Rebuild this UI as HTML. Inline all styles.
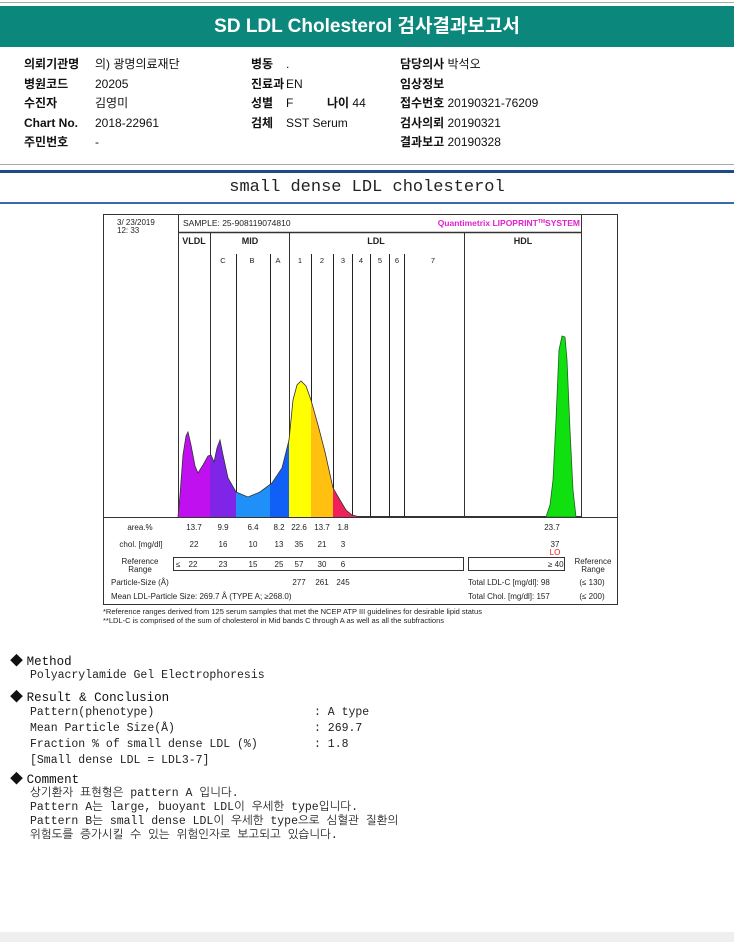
<!DOCTYPE html>
<html><head><meta charset="utf-8"><style>
body{margin:0;width:734px;height:942px;background:#fff;position:relative;overflow:hidden;font-family:"Liberation Sans","Noto Sans CJK KR",sans-serif;}
.a{position:absolute;white-space:nowrap}
.hdr{left:0;top:6px;width:734px;height:41px;background:#0b877b;color:#fff;font-size:19px;font-weight:bold;text-align:center;line-height:41px}
.i{font-size:12px;color:#111}
.b{font-weight:bold}
.m{font-family:"Liberation Mono","NanumGothic",monospace;font-size:11.5px;color:#222}
.s{font-size:13px;color:#111}
</style></head><body>
<div class="a" style="left:0;top:2px;width:734px;height:1px;background:#aaa"></div>
<div class="a hdr">SD LDL Cholesterol 검사결과보고서</div>

<div class="a i" style="left:24px;top:55px;line-height:19.5px">
<span class="b">의뢰기관명</span><br><span class="b">병원코드</span><br><span class="b">수진자</span><br><span class="b">Chart No.</span><br><span class="b">주민번호</span></div>
<div class="a i" style="left:95px;top:55px;line-height:19.5px">의) 광명의료재단<br>20205<br>김영미<br>2018-22961<br>-</div>
<div class="a i" style="left:251px;top:55px;line-height:19.5px"><span class="b">병동</span><br><span class="b">진료과</span><br><span class="b">성별</span><br><span class="b">검체</span></div>
<div class="a i" style="left:286px;top:55px;line-height:19.5px">.<br>EN<br>F<br>SST Serum</div>
<div class="a i" style="left:327px;top:94px"><span class="b">나이</span> 44</div>
<div class="a i" style="left:400px;top:55px;line-height:19.5px"><span class="b">담당의사</span> 박석오<br><span class="b">임상정보</span><br><span class="b">접수번호</span> 20190321-76209<br><span class="b">검사의뢰</span> 20190321<br><span class="b">결과보고</span> 20190328</div>

<div class="a" style="left:0;top:164px;width:734px;height:1px;background:#aaa"></div>
<div class="a" style="left:0;top:170px;width:734px;height:3px;background:#1f4a8a"></div>
<div class="a" style="left:0;top:178px;width:734px;text-align:center;font-family:'Liberation Mono',monospace;font-size:17px;color:#222">small dense LDL cholesterol</div>
<div class="a" style="left:0;top:202px;width:734px;height:2px;background:#3a6aa8"></div>

<svg class="a" style="left:0;top:0" width="734" height="942" viewBox="0 0 734 942" font-family="Liberation Sans, sans-serif">
<defs>
<clipPath id="c"><path d="M178,517 L180,495 L183,455 L186,436 L188,432 L191,445 L195,466 L198,473 L203,465 L208,456 L211,455 L214,462 L217,448 L220,440 L223,455 L228,478 L236,492 L248,497 L260,492 L272,483 L282,468 L289,440 L293,400 L297,385 L301,381 L306,386 L311,400 L318,425 L325,452 L333,488 L340,500 L346,510 L352,515 L360,517 Z"/></clipPath>
</defs>
<g fill="none" stroke="#333" stroke-width="1">
<rect x="103.5" y="214.5" width="514" height="390"/>
<rect x="178.5" y="214.5" width="403" height="302"/>
<line x1="178" y1="232.5" x2="582" y2="232.5" stroke-width="1.5"/>
<line x1="103" y1="517.5" x2="618" y2="517.5"/>
<line x1="210.5" y1="233" x2="210.5" y2="517"/>
<line x1="289.5" y1="233" x2="289.5" y2="517"/>
<line x1="464.5" y1="233" x2="464.5" y2="517"/>
<g stroke="#222"><line x1="236.5" y1="254" x2="236.5" y2="517"/><line x1="270.5" y1="254" x2="270.5" y2="517"/><line x1="311.5" y1="254" x2="311.5" y2="517"/><line x1="333.5" y1="254" x2="333.5" y2="517"/><line x1="352.5" y1="254" x2="352.5" y2="517"/><line x1="370.5" y1="254" x2="370.5" y2="517"/><line x1="389.5" y1="254" x2="389.5" y2="517"/><line x1="404.5" y1="254" x2="404.5" y2="517"/></g>
<rect x="173.5" y="557.5" width="290" height="13"/>
<rect x="468.5" y="557.5" width="96" height="13"/>
</g>
<g clip-path="url(#c)">
<rect x="178" y="300" width="32" height="218" fill="#c010f0"/>
<rect x="210" y="300" width="26" height="218" fill="#8025e8"/>
<rect x="236" y="300" width="34" height="218" fill="#1e90f8"/>
<rect x="270" y="300" width="19" height="218" fill="#1060f8"/>
<rect x="289" y="300" width="22" height="218" fill="#ffff00"/>
<rect x="311" y="300" width="22" height="218" fill="#ffc010"/>
<rect x="333" y="300" width="30" height="218" fill="#f0205a"/>
</g>
<path d="M178,517 L180,495 L183,455 L186,436 L188,432 L191,445 L195,466 L198,473 L203,465 L208,456 L211,455 L214,462 L217,448 L220,440 L223,455 L228,478 L236,492 L248,497 L260,492 L272,483 L282,468 L289,440 L293,400 L297,385 L301,381 L306,386 L311,400 L318,425 L325,452 L333,488 L340,500 L346,510 L352,515 L360,517" fill="none" stroke="#333" stroke-width="0.8"/>
<path d="M546,517 L550,505 L553,480 L556,420 L559,350 L562,336 L565,337 L567,360 L570,430 L573,490 L576,517 Z" fill="#10e010" stroke="#206020" stroke-width="0.8"/>
<g stroke="#333" stroke-width="1"><line x1="380" y1="517" x2="388" y2="517"/><line x1="420" y1="517" x2="430" y2="517"/><line x1="440" y1="517" x2="455" y2="517"/></g>
<g font-size="8" fill="#222">
<text x="117" y="225">3/ 23/2019</text><text x="117" y="233">12: 33</text>
<text x="183" y="226" font-size="8.5">SAMPLE:  25-908119074810</text>
<text x="580" y="226" text-anchor="end" fill="#e020d0" font-weight="bold" font-size="8.5">Quantimetrix LIPOPRINT<tspan font-size="5" dy="-3">TM</tspan><tspan dy="3">SYSTEM</tspan></text>
<g font-weight="bold" font-size="9"><text x="194" y="244" text-anchor="middle">VLDL</text><text x="250" y="244" text-anchor="middle">MID</text><text x="376" y="244" text-anchor="middle">LDL</text><text x="523" y="244" text-anchor="middle">HDL</text></g>
<g text-anchor="middle" font-size="7.5"><text x="223" y="263">C</text><text x="252" y="263">B</text><text x="278" y="263">A</text><text x="300" y="263">1</text><text x="322" y="263">2</text><text x="343" y="263">3</text><text x="361" y="263">4</text><text x="380" y="263">5</text><text x="397" y="263">6</text><text x="433" y="263">7</text></g>
<g text-anchor="middle"><text x="140" y="530">area.%</text><text x="141" y="547">chol. [mg/dl]</text><text x="140" y="564">Reference</text><text x="140" y="572">Range</text>
<text x="194" y="530">13.7</text><text x="223" y="530">9.9</text><text x="253" y="530">6.4</text><text x="279" y="530">8.2</text><text x="299" y="530">22.6</text><text x="322" y="530">13.7</text><text x="343" y="530">1.8</text><text x="552" y="530">23.7</text>
<text x="194" y="547">22</text><text x="223" y="547">16</text><text x="253" y="547">10</text><text x="279" y="547">13</text><text x="299" y="547">35</text><text x="322" y="547">21</text><text x="343" y="547">3</text><text x="555" y="547">37</text>
<text x="555" y="555" fill="#e02020">LO</text>
<text x="193" y="567">22</text><text x="223" y="567">23</text><text x="253" y="567">15</text><text x="279" y="567">25</text><text x="299" y="567">57</text><text x="322" y="567">30</text><text x="343" y="567">6</text>
<text x="593" y="564">Reference</text><text x="593" y="572">Range</text>
<text x="299" y="585">277</text><text x="322" y="585">261</text><text x="343" y="585">245</text>
<text x="592" y="585">(≤ 130)</text><text x="592" y="599">(≤ 200)</text></g>
<text x="176" y="567">≤</text><text x="548" y="567">≥ 40</text>
<text x="111" y="585">Particle-Size (Å)</text>
<text x="111" y="599">Mean LDL-Particle Size:   269.7 Å  (TYPE A; ≥268.0)</text>
<text x="468" y="585">Total LDL-C [mg/dl]:  98</text>
<text x="468" y="599">Total Chol. [mg/dl]:   157</text>
<text x="103" y="614" font-size="7.5">*Reference ranges derived from 125 serum samples that met the NCEP ATP III guidelines for desirable lipid status</text>
<text x="103" y="623" font-size="7.5">**LDL-C is comprised of the sum of cholesterol in Mid bands C through A as well as all the subfractions</text>
</g>
</svg>

<div class="a s" style="left:10px;top:650px">◆ <span style="font-family:'Liberation Mono','NanumGothic',monospace;font-size:12.5px">Method</span></div>
<div class="a m" style="left:30px;top:669px">Polyacrylamide Gel Electrophoresis</div>
<div class="a s" style="left:10px;top:686px">◆ <span style="font-family:'Liberation Mono','NanumGothic',monospace;font-size:12.5px">Result &amp; Conclusion</span></div>
<div class="a m" style="left:30px;top:705px;line-height:16px">Pattern(phenotype)<br>Mean Particle Size(Å)<br>Fraction % of small dense LDL (%)<br>[Small dense LDL = LDL3-7]</div>
<div class="a m" style="left:314px;top:705px;line-height:16px">:  A type<br>:  269.7<br>:  1.8</div>
<div class="a s" style="left:10px;top:768px">◆ <span style="font-family:'Liberation Mono','NanumGothic',monospace;font-size:12.5px">Comment</span></div>
<div class="a m" style="left:30px;top:787px;line-height:14px">상기환자 표현형은 pattern A 입니다.<br>Pattern A는 large, buoyant LDL이 우세한 type입니다.<br>Pattern B는 small dense LDL이 우세한 type으로 심혈관 질환의<br>위험도를 증가시킬 수 있는 위험인자로 보고되고 있습니다.</div>

<div class="a" style="left:0;top:932px;width:734px;height:10px;background:#efefef"></div>
</body></html>
